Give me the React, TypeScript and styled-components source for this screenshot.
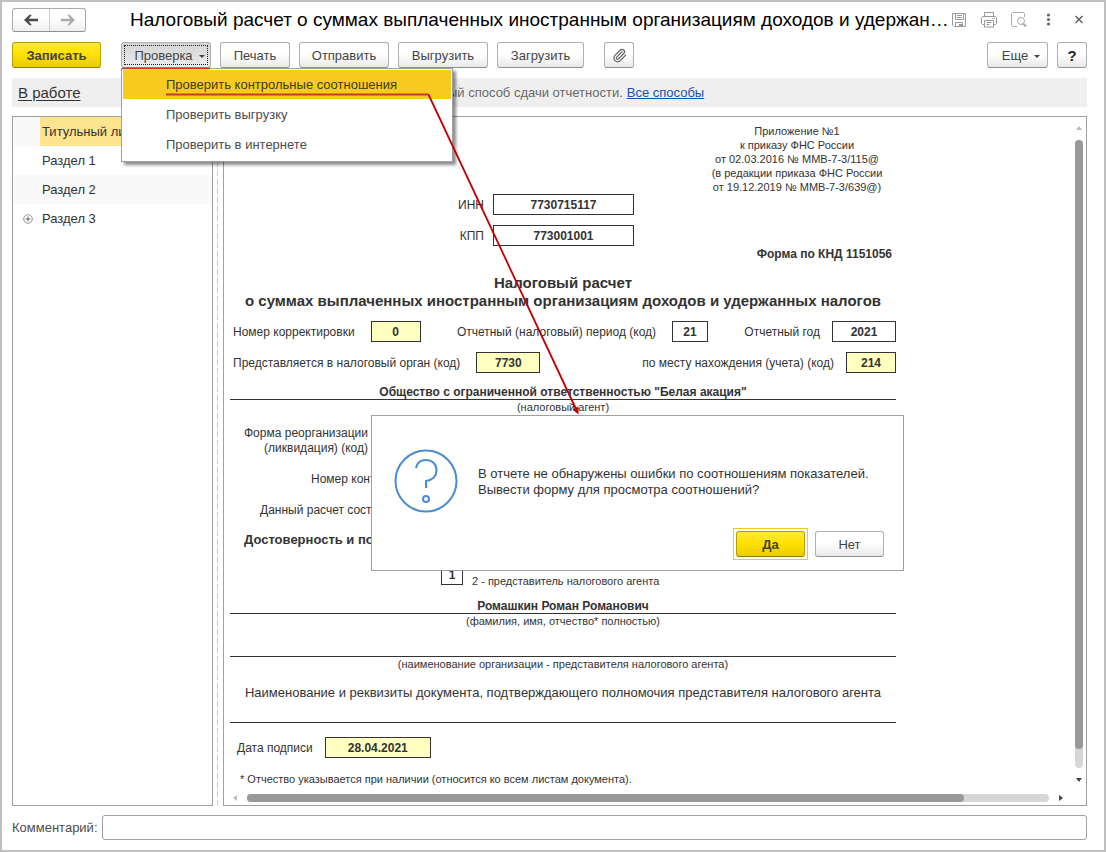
import React from "react";
import styled, { createGlobalStyle, css } from "styled-components";
import { Paperclip } from "lucide-react";

const GlobalStyle = createGlobalStyle`
  * { box-sizing: border-box; }
  body { margin: 0; background: #fff; }
  body, button, input { font-family: "Liberation Sans", Arial, sans-serif; }
`;

const Window = styled.main`
  position: relative;
  display: flex;
  flex-direction: column;
  min-height: 100vh;
  border: 2px solid #bfbfbf;
  padding: 6px 17px 10px 10px;
  color: #333;
  font-size: 13px;
  overflow: hidden;
`;

const TitleBar = styled.header`
  display: flex;
  align-items: center;
  height: 24px;
`;

const NavGroup = styled.div`
  display: flex;
  height: 24px;
  border: 1px solid #aaa;
  border-bottom-color: #8f8f8f;
  border-radius: 3px;
  background: linear-gradient(#fff 40%, #eee);
  flex: none;
`;

const NavButton = styled.button`
  display: grid;
  place-items: center;
  width: 36px;
  padding: 0;
  border: 0;
  background: none;
  & + & { border-left: 1px solid #ccc; }
`;

const Title = styled.h1`
  flex: 1;
  min-width: 0;
  margin: 0 0 0 44px;
  font-size: 19px;
  line-height: 24px;
  font-weight: 400;
  color: #000;
  white-space: nowrap;
`;

const TitleTools = styled.div`
  display: flex;
  gap: 14px;
`;

const IconButton = styled.button`
  display: grid;
  place-items: center;
  width: 16px;
  height: 18px;
  padding: 0;
  border: 0;
  background: none;
`;

const Toolbar = styled.div`
  display: flex;
  gap: 9px;
  margin-top: 10px;
`;

const primary = css`
  border-color: #b5a000;
  border-bottom-color: #8f7f00;
  background: linear-gradient(#ffe93f, #ffe100 45%, #e8cd00);
  font-weight: 700;
`;

const pressed = css`
  background: linear-gradient(#d4d4d4, #ececec);
  outline: 1px dotted #222;
  outline-offset: -4px;
`;

const Button = styled.button<{ $w: number; $primary?: boolean; $pressed?: boolean; $dropdown?: boolean }>`
  display: flex;
  align-items: center;
  justify-content: center;
  gap: 6px;
  width: ${(p) => p.$w}px;
  height: 26px;
  padding: 0 0 0 ${(p) => (p.$dropdown ? 7 : 0)}px;
  border: 1px solid #b0b0b0;
  border-bottom-color: #8f8f8f;
  border-radius: 3px;
  background: linear-gradient(#fff 45%, #e9e9e9);
  color: #444;
  font-size: 13px;
  white-space: nowrap;
  ${(p) => p.$primary && primary}
  ${(p) => p.$pressed && pressed}
`;

const SaveSlot = styled.div`margin-right: 11px;`;
const ClipSlot = styled.div`margin-left: 11px;`;
const RightSlot = styled.div`
  display: flex;
  gap: 9px;
  margin-left: auto;
`;

const Caret = styled.span`
  border: 3px solid transparent;
  border-top-color: #444;
  border-bottom: 0;
  margin-top: 2px;
`;

const HelpMark = styled.span`
  font-size: 15px;
  font-weight: 700;
  color: #222;
`;

const MenuAnchor = styled.div`position: relative;`;

const Menu = styled.ul`
  position: absolute;
  z-index: 2;
  top: 26px;
  left: 0;
  width: 332px;
  margin: 0;
  padding: 1px;
  list-style: none;
  border: 1px solid #a0a0a0;
  background: #fff;
  box-shadow: 3px 3px 3px rgba(0, 0, 0, 0.45);
`;

const MenuItem = styled.button<{ $active?: boolean }>`
  display: block;
  width: 100%;
  height: 29px;
  margin-bottom: 1px;
  padding: 0 0 0 43px;
  border: 0;
  background: ${(p) => (p.$active ? "#f9cb1f" : "#fff")};
  color: ${(p) => (p.$active ? "#403a20" : "#4d4d4d")};
  font-size: 13px;
  text-align: left;
`;

const StatusBar = styled.div`
  display: flex;
  align-items: center;
  height: 29px;
  margin-top: 10px;
  padding-left: 6px;
  background: #efefef;
  color: #6a6a6a;
`;

const StatusSlot = styled.div`width: 430px;`;
const StatusLink = styled.a`
  font-size: 15px;
  color: #333;
  text-underline-offset: 2px;
`;
const MethodText = styled.span`
  margin-right: 4px;
`;
const BlueLink = styled.a`color: #1a4fb4;`;

const Workspace = styled.div`
  display: flex;
  flex: 1;
  margin-top: 9px;
`;

const Tree = styled.ul`
  flex: none;
  width: 201px;
  margin: 0;
  padding: 0;
  list-style: none;
  border: 1px solid #a0a0a0;
`;

const TreeRow = styled.li<{ $alt?: boolean; $selected?: boolean }>`
  display: flex;
  height: 29px;
  line-height: 29px;
  background: ${(p) => (p.$alt ? "#f9f9f9" : "#fff")};
  color: #333;
  span:last-child {
    flex: 1;
    padding-left: 2px;
    background: ${(p) => (p.$selected ? "#fee48f" : "none")};
  }
`;

const Gutter = styled.span`
  display: grid;
  align-items: center;
  width: 27px;
  padding-left: 10px;
`;

const Splitter = styled.div`
  flex: none;
  width: 1px;
  margin: 0 5px 0 4px;
  background: repeating-linear-gradient(#ccc 0 6px, #fff 6px 9px);
`;

const Document = styled.section`
  display: grid;
  grid-template-columns: 1fr 8px;
  grid-template-rows: 1fr 8px;
  flex: 1;
  min-width: 0;
  border: 1px solid #a0a0a0;
  padding: 7px 3px 3px 6px;
`;

const Sheet = styled.div`
  display: flex;
  flex-direction: column;
  width: 100%;
  max-width: 666px;
  padding-bottom: 6px;
  font-size: 12px;
  line-height: 15px;
`;

const Appendix = styled.p`
  align-self: flex-end;
  width: 198px;
  margin: 0;
  font-size: 11px;
  line-height: 14px;
  text-align: center;
  white-space: nowrap;
`;

const CodeRow = styled.label`
  display: grid;
  grid-template-columns: 254px 141px;
  align-items: baseline;
  column-gap: 9px;
  margin-bottom: 10px;
  text-align: right;
`;

const Box = styled.input<{ $w: number; $editable?: boolean }>`
  width: ${(p) => p.$w}px;
  height: 21px;
  padding: 0;
  border: 1px solid #333;
  border-radius: 0;
  background: ${(p) => (p.$editable ? "#ffffc0" : "#fff")};
  color: #333;
  font-size: 12px;
  font-weight: 700;
  text-align: center;
`;

const FormCode = styled.strong`
  padding-right: 4px;
  text-align: right;
  margin-bottom: 12px;
  margin-top: -9px;
`;

const Heading = styled.h2`
  margin: 0 0 11px;
  font-size: 15px;
  line-height: 18px;
  text-align: center;
  white-space: nowrap;
`;

const FieldRow = styled.div`
  display: flex;
  justify-content: space-between;
  padding-left: 3px;
  margin-bottom: 10px;
`;

const Field = styled.label<{ $wide?: boolean }>`
  display: flex;
  align-items: baseline;
  gap: ${(p) => (p.$wide ? 16 : 12)}px;
  white-space: nowrap;
`;

const Signature = styled.div<{ $h: number }>`
  display: flex;
  align-items: flex-end;
  justify-content: center;
  height: ${(p) => p.$h}px;
  border-bottom: 1px solid #333;
  font-weight: 700;
  line-height: 13px;
`;

const Caption = styled.div`
  font-size: 11px;
  line-height: 14px;
  text-align: center;
`;

const Reorganization = styled.div`
  width: 138px;
  margin-top: 12px;
  text-align: right;
  white-space: nowrap;
`;

const Line = styled.div<{ $indent: number }>`
  margin-top: 16px;
  padding-left: ${(p) => p.$indent}px;
  white-space: nowrap;
`;

const Confirm = styled.strong`
  margin-top: 14px;
  padding-left: 14px;
  font-size: 13px;
  line-height: 16px;
`;

const Signer = styled.div`
  display: flex;
  align-items: center;
  gap: 9px;
  margin: 12px 0 9px 211px;
  height: 28px;
  font-size: 11px;
  line-height: 14px;
  input { margin-top: 1px; }
`;

const Authority = styled.div`
  margin-top: 14px;
  font-size: 13px;
  text-align: center;
  white-space: nowrap;
`;

const DateRow = styled.div`
  display: flex;
  margin: 14px 0 14px 7px;
`;

const Footnote = styled.div`
  padding-left: 10px;
  font-size: 11px;
  white-space: nowrap;
`;

const VScroll = styled.div`
  display: flex;
  flex-direction: column;
  align-items: center;
  justify-content: space-between;
  padding: 1px 0 11px;
`;

const HScroll = styled.div`
  display: flex;
  align-items: center;
  justify-content: space-between;
  padding: 0 11px 0 2px;
`;

const VTrack = styled.div`
  flex: 1;
  width: 8px;
  margin: 9px 0;
  border-radius: 4px;
  background: #d6d6d6;
  &::before {
    content: "";
    display: block;
    height: 97%;
    border-radius: 4px;
    background: #999;
  }
`;

const HTrack = styled.div`
  flex: 1;
  height: 8px;
  margin: 0 9px;
  border-radius: 4px;
  background: #d6d6d6;
  &::before {
    content: "";
    display: block;
    width: 89.4%;
    height: 8px;
    border-radius: 4px;
    background: #999;
  }
`;

const CommentRow = styled.label`
  display: flex;
  align-items: center;
  gap: 4px;
  margin-top: 9px;
  color: #4d4d4d;
`;

const CommentInput = styled.input`
  flex: 1;
  min-width: 0;
  height: 25px;
  border: 1px solid #a0a0a0;
  border-radius: 3px;
`;

const Dialog = styled.div`
  position: absolute;
  z-index: 3;
  top: 413px;
  left: 369px;
  display: flex;
  flex-direction: column;
  justify-content: space-between;
  width: 533px;
  height: 156px;
  padding: 33px 16px 10px 22px;
  border: 1px solid #a0a0a0;
  background: #fff;
`;

const Message = styled.div`
  display: flex;
  align-items: center;
  gap: 20px;
  font-size: 13px;
  line-height: 16px;
  svg { margin-bottom: 2px; }
`;

const DialogButtons = styled.div`
  display: flex;
  justify-content: flex-end;
  align-items: center;
  gap: 7px;
  padding-right: 3px;
`;

const FocusRing = styled.div`
  padding: 2px;
  border: 1px solid #f7c51e;
`;

const Pointer = styled.svg`
  position: absolute;
  z-index: 4;
  top: -2px;
  left: -2px;
  pointer-events: none;
`;

const Arrow = ({ d, dim }: { d: string; dim?: boolean }) => (
  <svg width="6" height="6" viewBox="0 0 6 6">
    <path d={d} fill={dim ? "#bbb" : "#444"} />
  </svg>
);

const NavArrow = ({ back }: { back?: boolean }) => (
  <svg width="16" height="12" viewBox="0 0 16 12" fill={back ? "#4a4a4a" : "#aaa"}>
    {back ? (
      <path d="M1 6L6.500 .8H8.800L5.800 4.800H15V7.200H5.800L8.800 11.200H6.500z" />
    ) : (
      <path d="M15 6L9.500 .8H7.200L10.200 4.800H1V7.200H10.200L7.200 11.200H9.500z" />
    )}
  </svg>
);

export default function App() {
  return (
    <>
      <GlobalStyle />
      <Window>
        <TitleBar>
          <NavGroup>
            <NavButton aria-label="Назад"><NavArrow back /></NavButton>
            <NavButton aria-label="Вперед"><NavArrow /></NavButton>
          </NavGroup>
          <Title>Налоговый расчет о суммах выплаченных иностранным организациям доходов и удержан…</Title>
          <TitleTools>
            <IconButton aria-label="Сохранить">
              <svg width="16" height="16" viewBox="0 0 16 16" fill="none" stroke="#999">
                <path d="M1.500 1.500H14.500V14.500H3L1.500 13zM4.500 1.500V7.500H12.500V1.500M6 3.500H11M6 5.500H11M4.500 14.500V10.500H11.500V14.500" />
                <path d="M8 12h3v2H8z" fill="#999" stroke="none" />
              </svg>
            </IconButton>
            <IconButton aria-label="Печать документа">
              <svg width="16" height="16" viewBox="0 0 16 16" fill="none" stroke="#999">
                <path d="M3.500 4.500V.5H12.500V4.500M3.500 12.500H1.500L.5 11.500V5.500L1.500 4.500H14.500L15.500 5.500V11.500L14.500 12.500H12.500M3.500 8.500H12.500V15H3.500zM5.500 10.500H10.500M5.500 12.500H8.500M11 6.500H12M13 6.500H14" />
              </svg>
            </IconButton>
            <IconButton aria-label="Просмотр">
              <svg width="16" height="16" viewBox="0 0 16 16" fill="none" stroke="#aaa">
                <path d="M13.500 5V1.500L12.500 .5H1.500L.5 1.500V13.500L1.500 14.500H6" />
                <circle cx="10" cy="9" r="3.500" />
                <path d="M12 11.500L15 14.500" strokeWidth="2" />
              </svg>
            </IconButton>
            <IconButton aria-label="Меню">
              <svg width="16" height="16" viewBox="0 0 16 16" fill="#666">
                <circle cx="7.500" cy="3" r="1.600" />
                <circle cx="7.500" cy="7.500" r="1.600" />
                <circle cx="7.500" cy="12" r="1.600" />
              </svg>
            </IconButton>
            <IconButton aria-label="Закрыть">
              <svg width="16" height="16" viewBox="0 0 16 16" stroke="#555" strokeWidth="1.200">
                <path d="M4.500 4L11.500 11M11.500 4L4.500 11" />
              </svg>
            </IconButton>
          </TitleTools>
        </TitleBar>

        <Toolbar>
          <SaveSlot><Button $w={89} $primary>Записать</Button></SaveSlot>
          <MenuAnchor>
            <Button $w={90} $pressed $dropdown aria-haspopup="menu" aria-expanded="true">Проверка<Caret /></Button>
            <Menu>
              <li><MenuItem $active>Проверить контрольные соотношения</MenuItem></li>
              <li><MenuItem>Проверить выгрузку</MenuItem></li>
              <li><MenuItem>Проверить в интернете</MenuItem></li>
            </Menu>
          </MenuAnchor>
          <Button $w={70}>Печать</Button>
          <Button $w={90}>Отправить</Button>
          <Button $w={90}>Выгрузить</Button>
          <Button $w={87}>Загрузить</Button>
          <ClipSlot>
            <Button $w={30} aria-label="Вложения"><Paperclip size={15} color="#666" strokeWidth={2} /></Button>
          </ClipSlot>
          <RightSlot>
            <Button $w={61} $dropdown>Еще<Caret /></Button>
            <Button $w={30} aria-label="Справка"><HelpMark>?</HelpMark></Button>
          </RightSlot>
        </Toolbar>

        <StatusBar>
          <StatusSlot><StatusLink href="#status">В работе</StatusLink></StatusSlot>
          <MethodText>ый способ сдачи отчетности.</MethodText>
          <BlueLink href="#methods">Все способы</BlueLink>
        </StatusBar>

        <Workspace>
          <Tree>
            <TreeRow $alt $selected><Gutter /><span>Титульный лист</span></TreeRow>
            <TreeRow><Gutter /><span>Раздел 1</span></TreeRow>
            <TreeRow $alt><Gutter /><span>Раздел 2</span></TreeRow>
            <TreeRow>
              <Gutter>
                <svg width="10" height="10" viewBox="0 0 10 10" fill="none" stroke="#999">
                  <circle cx="5" cy="5" r="4.300" />
                  <path d="M2.500 5H7.500M5 2.500V7.500" stroke="#666" />
                </svg>
              </Gutter>
              <span>Раздел 3</span>
            </TreeRow>
          </Tree>
          <Splitter />
          <Document>
            <Sheet>
              <Appendix>
                Приложение №1<br />к приказу ФНС России<br />от 02.03.2016 № ММВ-7-3/115@<br />
                (в редакции приказа ФНС России<br />от 19.12.2019 № ММВ-7-3/639@)
              </Appendix>
              <CodeRow>ИНН<Box $w={141} defaultValue="7730715117" /></CodeRow>
              <CodeRow>КПП<Box $w={141} defaultValue="773001001" /></CodeRow>
              <FormCode>Форма по КНД 1151056</FormCode>
              <Heading>
                Налоговый расчет<br />о суммах выплаченных иностранным организациям доходов и удержанных налогов
              </Heading>
              <FieldRow>
                <Field $wide>Номер корректировки<Box $w={50} $editable defaultValue="0" /></Field>
                <Field $wide>Отчетный (налоговый) период (код)<Box $w={36} defaultValue="21" /></Field>
                <Field>Отчетный год<Box $w={64} defaultValue="2021" /></Field>
              </FieldRow>
              <FieldRow>
                <Field $wide>Представляется в налоговый орган (код)<Box $w={64} $editable defaultValue="7730" /></Field>
                <Field>по месту нахождения (учета) (код)<Box $w={50} $editable defaultValue="214" /></Field>
              </FieldRow>
              <Signature $h={17}>Общество с ограниченной ответственностью "Белая акация"</Signature>
              <Caption>(налоговый агент)</Caption>
              <Reorganization>Форма реорганизации<br />(ликвидация) (код)</Reorganization>
              <Line $indent={81}>Номер контактного телефона</Line>
              <Line $indent={30}>Данный расчет составлен</Line>
              <Confirm>Достоверность и полноту сведений подтверждаю</Confirm>
              <Signer>
                <Box $w={22} defaultValue="1" aria-label="Подписант" />
                <span>1 - налоговый агент<br />2 - представитель налогового агента</span>
              </Signer>
              <Signature $h={17}>Ромашкин Роман Романович</Signature>
              <Caption>(фамилия, имя, отчество* полностью)</Caption>
              <Signature $h={29} />
              <Caption>(наименование организации - представителя налогового агента)</Caption>
              <Authority>Наименование и реквизиты документа, подтверждающего полномочия представителя налогового агента</Authority>
              <Signature $h={23} />
              <DateRow><Field>Дата подписи<Box $w={106} $editable defaultValue="28.04.2021" /></Field></DateRow>
              <Footnote>* Отчество указывается при наличии (относится ко всем листам документа).</Footnote>
            </Sheet>
            <VScroll>
              <Arrow dim d="M0 5L3 1L6 5z" />
              <VTrack />
              <Arrow d="M0 1L3 5L6 1z" />
            </VScroll>
            <HScroll>
              <Arrow dim d="M5 0L1 3L5 6z" />
              <HTrack />
              <Arrow d="M1 0L5 3L1 6z" />
            </HScroll>
          </Document>
        </Workspace>

        <CommentRow>Комментарий:<CommentInput /></CommentRow>

        <Dialog role="dialog">
          <Message>
            <svg width="64" height="64" viewBox="0 0 64 64" fill="none" stroke="#4a8cd2" strokeWidth="2">
              <circle cx="32" cy="32" r="30.500" />
              <path d="M22 19C23 13.500 27 11 32 11C38 11 42.500 15 42.500 21C42.500 27.500 38 31 32 32V39" />
              <circle cx="32" cy="50" r="3" />
            </svg>
            <span>В отчете не обнаружены ошибки по соотношениям показателей.<br />Вывести форму для просмотра соотношений?</span>
          </Message>
          <DialogButtons>
            <FocusRing><Button $w={69} $primary>Да</Button></FocusRing>
            <Button $w={69}>Нет</Button>
          </DialogButtons>
        </Dialog>

        <Pointer width="620" height="430" viewBox="0 0 620 430" fill="none">
          <path d="M122 68.500H210" stroke="#c0392b" strokeWidth="1.500" />
          <path d="M166 94.500H428.500" stroke="#c43c2a" strokeWidth="2" />
          <path d="M428.500 94.500L576 409" stroke="#c00000" strokeWidth="1.800" />
          <path d="M578.500 414.500L572.500 409.500L578.500 406.500z" fill="#c00000" />
        </Pointer>
      </Window>
    </>
  );
}
